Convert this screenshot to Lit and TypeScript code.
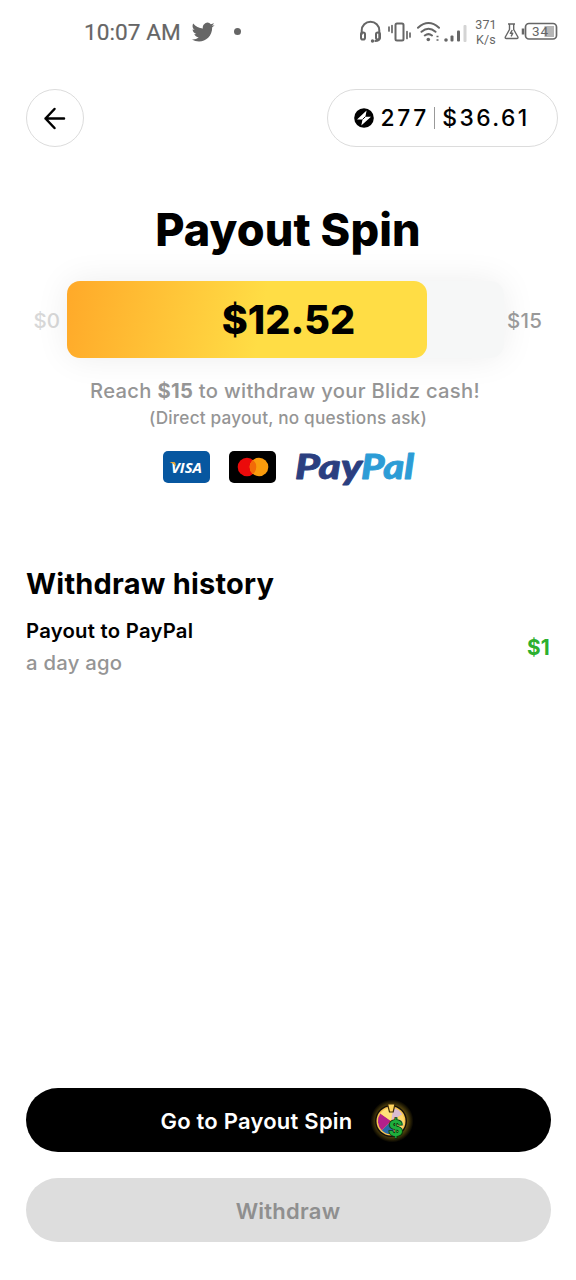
import { LitElement, html, css, svg } from "lit";
import { customElement, property } from "lit/decorators.js";

@customElement("status-bar")
class StatusBar extends LitElement {
  static styles = css`
    :host {
      display: flex;
      align-items: center;
      height: 64px;
      padding: 0 18px 0 84px;
      box-sizing: border-box;
      font-family: Roboto, sans-serif;
      color: #666;
    }
    svg { display: block; flex: none; }
    .time { font-size: 22.600px; letter-spacing: 0.05px; line-height: 30px; white-space: nowrap; padding-top: 1px; -webkit-text-stroke: 0.200px #666; }
    .bird { margin-left: 10px; margin-top: -1px; }
    .dot { width: 7px; height: 7px; border-radius: 50%; background: #666; margin-left: 19px; margin-top: -1px; }
    .right { margin-left: auto; display: flex; align-items: center; }
    .rate { width: 24px; margin: -1px 6px 0 6px; font-size: 12.500px; line-height: 15px; text-align: center; letter-spacing: 0.1px; }
  `;
  render() {
    return html`
      <span class="time">10:07 AM</span>
      <svg class="bird" width="24" height="24" viewBox="0 0 24 24" fill="#666">
        <path d="M23.600 4.900c-.8.4-1.700.6-2.700.8 1-.6 1.700-1.500 2-2.600-.9.5-1.900.9-3 1.100A4.700 4.700 0 0 0 11.900 8.500C8 8.300 4.500 6.400 2.200 3.600c-1.300 2.200-.6 4.900 1.500 6.300-.8 0-1.500-.2-2.100-.6 0 2.300 1.600 4.200 3.800 4.700-.7.200-1.400.2-2.100.1.600 1.900 2.300 3.200 4.400 3.300A9.500 9.500 0 0 1 .7 19.300c8.700 5.500 20.500.2 20.500-12.000.9-.6 1.800-1.500 2.400-2.400z"/>
      </svg>
      <span class="dot"></span>
      <div class="right">
        <svg width="109" height="26" viewBox="0 0 109 26" fill="none" stroke="#666" stroke-width="2" stroke-linecap="round">
          <path d="M2.700 15V11.500a8.800 8.800 0 0 1 17.600 0V19q0 3-4 3"/>
          <rect x="2" y="13.500" width="4" height="7" rx="1.800"/>
          <rect x="17" y="13.500" width="4" height="7" rx="1.800"/>
          <circle cx="13.500" cy="22" r="1.700" fill="#666" stroke="none"/>
          <rect x="36.500" y="4.500" width="8" height="17" rx="1.500"/>
          <path d="M33 6.500v7M30 8v4M48 12.500v7M51 14v4" stroke-width="1.700"/>
          <path d="M59 8.800q10.500-9.500 21 0M62.500 12.800q7-6 14 0M65.800 16.500q3.700-2.800 7.200 0"/>
          <circle cx="69.300" cy="20.500" r="1.800" fill="#666" stroke="none"/>
          <path d="M77.500 17.500h2M77.500 21h2" stroke-width="1.700" stroke-linecap="butt"/>
          <g stroke="none" fill="#666">
            <circle cx="87" cy="21" r="1.800"/>
            <rect x="91.500" y="16.500" width="3" height="6" rx="1"/>
            <rect x="98" y="11.500" width="3" height="11" rx="1"/>
            <rect x="104.500" y="6" width="3" height="17" rx="1" fill="#d4d4d4"/>
          </g>
        </svg>
        <div class="rate">371<br />K/s</div>
        <svg width="54" height="20" viewBox="0 0 54 20" fill="none" stroke="#666" stroke-width="1.400" stroke-linejoin="round">
          <path d="M4 2h7M5.500 2v5.500L1.300 15q-.4 1.500 1 1.500h10.600q1.400 0 1-1.500L9.700 7.500V2"/>
          <path d="M8.300 8l-2 3.300h2.400l-1.600 3"/>
          <path d="M19 6.500v6" stroke-width="2.500"/>
          <rect x="21.500" y="1.500" width="31" height="15.500" rx="3.500" stroke-width="1.700"/>
          <rect x="40.500" y="4" width="9.500" height="11" fill="#b5b5b5" stroke="none"/>
          <text x="28" y="14.200" font-size="13.500" fill="#666" stroke="none" font-family="Roboto, sans-serif" textLength="16">34</text>
        </svg>
      </div>
    `;
  }
}

@customElement("payout-progress")
class PayoutProgress extends LitElement {
  @property({ type: Number }) current = 0;
  @property({ type: Number }) goal = 1;
  static styles = css`
    :host { display: grid; grid-template-columns: 67px 437px 72px; align-items: center; height: 77px; }
    .edge { font-size: 20.500px; line-height: 26px; font-weight: 500; padding-top: 2px; }
    .from { color: #d8d8d8; text-align: right; padding-right: 7px; }
    .to { color: #999; margin-left: 3px; z-index: 1; letter-spacing: 0.200px; }
    .track { height: 77px; border-radius: 14px; background: #f6f7f7; box-shadow: 0 0 34px rgba(0, 0, 0, 0.075); display: grid; }
    .fill, .amount { grid-area: 1 / 1; }
    .fill { border-radius: 13px; background: linear-gradient(100deg, #ffa929 0%, #ffdd45 54%); }
    .amount { align-self: center; text-align: center; padding-left: 6px; font-size: 39.500px; font-weight: 800; line-height: 48px; z-index: 1; color: #000; }
  `;
  render() {
    const pct = (this.current / this.goal) * 98.7;
    return html`
      <span class="edge from">$0</span>
      <div class="track">
        <div class="fill" style="width:${pct}%"></div>
        <div class="amount">$${this.current.toFixed(2)}</div>
      </div>
      <span class="edge to">$${this.goal}</span>
    `;
  }
}

const segment = (from: number, to: number, color: string) => {
  const p = (a: number) => `${20 + 13 * Math.cos((a * Math.PI) / 180)} ${22 + 13 * Math.sin((a * Math.PI) / 180)}`;
  return svg`<path d=${`M20 22L${p(from)}A13 13 0 0 1 ${p(to)}Z`} fill=${color}></path>`;
};

@customElement("app-root")
class AppRoot extends LitElement {
  static styles = css`
    :host {
      display: flex;
      flex-direction: column;
      width: 576px;
      height: 1280px;
      background: #fff;
      font-family: Inter, sans-serif;
      color: #000;
      overflow: hidden;
    }
    svg { display: block; flex: none; }
    header { display: flex; justify-content: space-between; padding: 25px 18.500px 0 25.500px; height: 58px; }
    .back, .balance { box-sizing: border-box; height: 58px; border: 1.500px solid #dcdcdc; border-radius: 29px; display: flex; align-items: center; background: #fff; }
    .back { width: 58px; justify-content: center; }
    .balance { width: 231px; padding-left: 26px; font-size: 22.800px; font-weight: 500; }
    .points { margin-left: 7px; letter-spacing: 2.600px; }
    .rule { width: 1.500px; height: 22px; background: #999; margin: 0 7px 0 5px; }
    .cash { letter-spacing: 2.400px; }
    .points, .cash { margin-top: -1px; }
    h1 { margin: 58px 0 26px; text-align: center; font-size: 45px; line-height: 50px; font-weight: 800; letter-spacing: 0.100px; }
    .hint { margin-top: 20px; text-align: center; color: #959595; font-weight: 500; }
    .reach { font-size: 20.200px; line-height: 26px; letter-spacing: 0.300px; padding-right: 6px; }
    .reach b { font-weight: 700; }
    .direct { font-size: 17.200px; line-height: 27px; letter-spacing: 0.200px; }
    .logos { display: flex; justify-content: center; gap: 19px; margin-top: 20px; height: 34px; }
    .paypal { margin: -8px -4px 0 -4px; }
    h2 { margin: 81px 26px 13px; font-size: 29px; line-height: 36px; font-weight: 700; letter-spacing: 0.220px; }
    .entry { display: flex; justify-content: space-between; align-items: center; padding: 0 26px 0 26px; line-height: 32px; font-size: 20.300px; letter-spacing: 0.250px; }
    .name { font-weight: 600; }
    .when { color: #959595; font-weight: 500; }
    .sum { color: #2cb02f; font-weight: 700; font-size: 20.800px; padding-top: 2px; }
    footer { margin-top: auto; padding: 0 25px 38px 26px; display: grid; gap: 26px; }
    button { border: 0; height: 64px; border-radius: 32px; font: 600 22px/28px Inter, sans-serif; letter-spacing: 0.230px; display: flex; align-items: center; justify-content: center; padding: 2px 1px 0 0; }
    .primary { background: #000; color: #fff; gap: 18px; padding-right: 2px; }
    .muted { background: #ddd; color: #8f8f8f; }
  `;
  render() {
    return html`
      <status-bar></status-bar>
      <header>
        <div class="back">
          <svg width="24" height="24" viewBox="0 0 24 24" fill="none" stroke="#000" stroke-width="2.500" stroke-linecap="round" stroke-linejoin="round">
            <path d="M21 12.500H2.500M11.500 3L2.500 12.500L11.500 22"/>
          </svg>
        </div>
        <div class="balance">
          <svg width="20" height="20" viewBox="0 0 20 20">
            <circle cx="10" cy="10" r="9.800" fill="#000"/>
            <path d="M12.600 2.600L3 11.400h5.500L7.300 17.400L17 8.700h-5.600z" fill="#fff"/>
            <path d="M8.500 11.400L11.400 8.700" stroke="#000" stroke-width="1"/>
          </svg>
          <span class="points">277</span><span class="rule"></span><span class="cash">$36.61</span>
        </div>
      </header>
      <h1>Payout Spin</h1>
      <payout-progress .current=${12.52} .goal=${15}></payout-progress>
      <div class="hint">
        <div class="reach">Reach <b>$15</b> to withdraw your Blidz cash!</div>
        <div class="direct">(Direct payout, no questions ask)</div>
      </div>
      <div class="logos">
        <svg width="47" height="32" viewBox="0 0 47 32">
          <rect width="47" height="32" rx="5" fill="#0757a0"/>
          <text x="8" y="21.500" font-family="Open Sans, sans-serif" font-size="14.500" font-weight="700" font-style="italic" fill="#fff" textLength="31" lengthAdjust="spacingAndGlyphs">VISA</text>
          <path d="M6.500 11h4.400q1.200.1 1.500 1.300l.7 3.200Q10.500 12 6.500 11z" fill="#e8a735"/>
        </svg>
        <svg width="47" height="32" viewBox="0 0 47 32">
          <rect width="47" height="32" rx="5" fill="#000"/>
          <circle cx="18" cy="16" r="9.300" fill="#eb0a0a"/>
          <circle cx="30" cy="16" r="9.300" fill="#f99b0c"/>
          <path d="M24 8.900a9.300 9.300 0 0 1 0 14.200a9.300 9.300 0 0 1 0-14.200z" fill="#f26a08"/>
        </svg>
        <svg class="paypal" width="127" height="50" viewBox="-4 -8 127 50" font-family="Lato, sans-serif" font-size="33.500" font-weight="900" font-style="italic" stroke-width="0.800" stroke-linejoin="round">
          <text x="0" y="27.500" fill="#2b3f80" stroke="#2b3f80" textLength="67" lengthAdjust="spacingAndGlyphs">Pay</text>
          <text x="66" y="27.500" fill="#2c9cd6" stroke="#2c9cd6" textLength="53" lengthAdjust="spacingAndGlyphs">Pal</text>
        </svg>
      </div>
      <h2>Withdraw history</h2>
      <div class="entry">
        <div>
          <div class="name">Payout to PayPal</div>
          <div class="when">a day ago</div>
        </div>
        <div class="sum">$1</div>
      </div>
      <footer>
        <button class="primary">
          Go to Payout Spin
          <svg width="44" height="44" viewBox="0 0 44 44">
            <defs>
              <radialGradient id="glow">
                <stop offset="0.650" stop-color="#6b570f"/>
                <stop offset="1" stop-color="#6b570f" stop-opacity="0"/>
              </radialGradient>
            </defs>
            <circle cx="21" cy="22" r="21.500" fill="url(#glow)"/>
            <circle cx="20" cy="22" r="16" fill="#14100a"/>
            <circle cx="20" cy="22" r="14.500" fill="#f9c552"/>
            ${segment(-80, -30, "#d9bcd2")}
            ${segment(-30, 60, "#ffd76a")}
            ${segment(75, 135, "#2869a8")}
            ${segment(135, 215, "#b3208b")}
            ${segment(215, 280, "#ffe07a")}
            <path d="M16.500 5h7.500l-1.800 8h-3.700z" fill="#ffd45e" stroke="#3b2a08" stroke-width="1.200"/>
            <text x="17.500" y="36.500" font-family="Inter, sans-serif" font-size="22" font-weight="700" fill="#1fae3c" stroke="#06310f" stroke-width="1.500" paint-order="stroke">$</text>
          </svg>
        </button>
        <button class="muted">Withdraw</button>
      </footer>
    `;
  }
}
